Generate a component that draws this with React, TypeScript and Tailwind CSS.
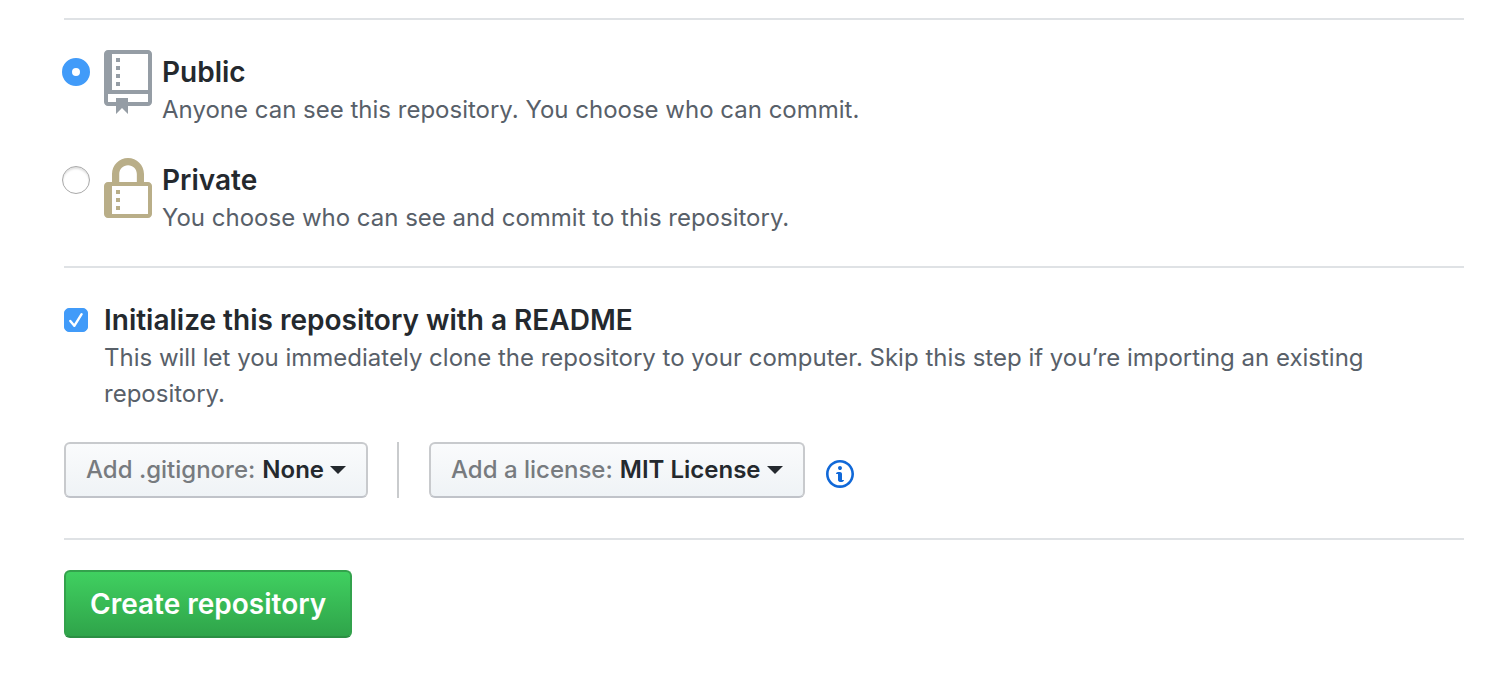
import { useState } from "react";
import type { ReactNode } from "react";

const REPO_PATH =
  "M4 9H3V8h1v1zm0-3H3v1h1V6zm0-2H3v1h1V4zm0-2H3v1h1V2zm8-1v12c0 .55-.45 1-1 1H6v2l-1.5-1.5L3 16v-2H1c-.55 0-1-.45-1-1V1c0-.55.45-1 1-1h10c.55 0 1 .45 1 1zm-1 10H1v2h2v-1h3v1h5v-2zm0-10H2v9h9V1z";
const LOCK_PATH =
  "M4 13H3v-1h1v1zm8-6v7c0 .55-.45 1-1 1H1c-.55 0-1-.45-1-1V7c0-.55.45-1 1-1h1V4c0-2.2 1.8-4 4-4s4 1.8 4 4v2h1c.55 0 1 .45 1 1zM3.8 6h4.41V4c0-1.22-.98-2.2-2.2-2.2-1.22 0-2.2.98-2.2 2.2v2H3.8zM11 7H2v7h9V7zM4 8H3v1h1V8zm0 2H3v1h1v-1z";
const INFO_PATH =
  "M6.3 5.69a.942.942 0 0 1-.28-.7c0-.28.09-.52.28-.7.19-.18.42-.28.7-.28.28 0 .52.09.7.28.18.19.28.42.28.7 0 .28-.09.52-.28.7a1 1 0 0 1-.7.3c-.28 0-.52-.11-.7-.3zM8 7.99c-.02-.25-.11-.48-.31-.69-.2-.19-.42-.3-.69-.31H6c-.27.02-.48.13-.69.31-.2.2-.3.44-.31.69h1v3c.02.27.11.5.31.69.2.2.42.31.69.31h1c.27 0 .48-.11.69-.31.2-.19.3-.42.31-.69H8V7.98v.01zM7 2.3c-3.14 0-5.7 2.54-5.7 5.68 0 3.14 2.56 5.7 5.7 5.7s5.7-2.55 5.7-5.7c0-3.15-2.56-5.69-5.7-5.69v.01zM7 .98c3.86 0 7 3.14 7 7s-3.14 7-7 7-7-3.12-7-7 3.14-7 7-7z";

type VisibilityProps = {
  id: string;
  title: string;
  note: string;
  checked: boolean;
  onSelect: () => void;
  icon: ReactNode;
};

function VisibilityOption({ id, title, note, checked, onSelect, icon }: VisibilityProps) {
  return (
    <div className="flex items-start">
      <div className="w-10 shrink-0 pt-2">
        <input
          id={id}
          type="radio"
          name="visibility"
          checked={checked}
          onChange={onSelect}
          aria-describedby={id + "-note"}
          className="-ml-0.5 block size-7 appearance-none rounded-full border border-[#a9a9a9] bg-white shadow-[inset_0_2px_2px_rgba(0,0,0,0.12)] checked:border-10 checked:border-[#419bf9] checked:shadow-none"
        />
      </div>
      <div className="w-12 shrink-0">{icon}</div>
      <div className="pt-0.5 pl-2.5">
        <label htmlFor={id} className="block text-[28px] leading-10 font-semibold">
          {title}
        </label>
        <p id={id + "-note"} className="text-[24px] leading-9 text-[#586069]">
          {note}
        </p>
      </div>
    </div>
  );
}

function Picker({ label, options, initial }: { label: string; options: string[]; initial: string }) {
  const [value, setValue] = useState(initial);
  return (
    <label className="flex h-14 items-center rounded-md border-2 border-[#c8cacd] border-b-[#c0c3c9] bg-linear-to-b from-[#fafbfc] to-[#eff3f6] px-5 text-[24px] leading-9">
      <span className="font-medium text-[#777b7f]">{label}</span>
      <select
        value={value}
        onChange={(e) => setValue(e.target.value)}
        className="ml-[7px] appearance-none field-sizing-content bg-transparent font-semibold text-[#24292e]"
      >
        {options.map((o) => (
          <option key={o}>{o}</option>
        ))}
      </select>
      <svg viewBox="0 0 16 8" className="ml-1.5 h-2 w-4" aria-hidden="true">
        <path d="M0 0h16L8 8z" fill="#24292e" />
      </svg>
    </label>
  );
}

export default function App() {
  const [visibility, setVisibility] = useState("public");
  const [readme, setReadme] = useState(true);

  return (
    <form
      onSubmit={(e) => e.preventDefault()}
      className="bg-white pt-[18px] pr-10 pb-9 pl-16 font-[Inter,sans-serif] text-[#24292e]"
    >
      <fieldset
        aria-label="Visibility"
        className="flex flex-col gap-[30px] border-y-2 border-[#dfe2e5] py-[30px]"
      >
        <VisibilityOption
          id="public"
          title="Public"
          note="Anyone can see this repository. You choose who can commit."
          checked={visibility === "public"}
          onSelect={() => setVisibility("public")}
          icon={
            <svg viewBox="0 0 12 16" className="h-16 w-12" fill="#959da5" aria-hidden="true">
              <path fillRule="evenodd" d={REPO_PATH} />
            </svg>
          }
        />
        <VisibilityOption
          id="private"
          title="Private"
          note="You choose who can see and commit to this repository."
          checked={visibility === "private"}
          onSelect={() => setVisibility("private")}
          icon={
            <svg viewBox="0 0 12 16" className="h-16 w-12" fill="#b9ae88" aria-hidden="true">
              <path fillRule="evenodd" d={LOCK_PATH} />
            </svg>
          }
        />
      </fieldset>

      <section className="flex flex-col gap-[30px] border-b-2 border-[#dfe2e5] pt-8 pb-10">
        <div className="flex items-start">
          <div className="grid w-10 shrink-0 pt-2">
            <input
              id="readme"
              type="checkbox"
              checked={readme}
              onChange={(e) => setReadme(e.target.checked)}
              aria-describedby="readme-note"
              className="peer col-start-1 row-start-1 size-6 appearance-none rounded-[5px] border border-[#a9a9a9] checked:border-[#419bf9] checked:bg-[#419bf9]"
            />
            <svg
              viewBox="0 0 24 24"
              className="pointer-events-none invisible col-start-1 row-start-1 size-6 peer-checked:visible"
              fill="none"
              stroke="#fff"
              strokeWidth="2.4"
              strokeLinecap="round"
              strokeLinejoin="round"
              aria-hidden="true"
            >
              <path d="M6.3 13l4 4.8L17.6 6.2" />
            </svg>
          </div>
          <div>
            <label htmlFor="readme" className="block text-[28px] leading-10 font-semibold">
              Initialize this repository with a README
            </label>
            <p id="readme-note" className="text-[24px] leading-9 text-[#586069]">
              This will let you immediately clone the repository to your computer. Skip this step if you’re importing an
              existing repository.
            </p>
          </div>
        </div>

        <div className="flex items-center">
          <Picker label="Add .gitignore:" options={["None", "Node", "Python"]} initial="None" />
          <div className="mr-[30px] ml-[29px] w-0.5 self-stretch bg-[#c9cbcd]" />
          <Picker label="Add a license:" options={["None", "MIT License", "Apache License 2.0"]} initial="MIT License" />
          <a href="#licenses" aria-label="About licenses" className="ml-[21px] pt-2 text-[#1068d8]">
            <svg viewBox="0 0 14 16" className="h-8 w-7" fill="currentColor" aria-hidden="true">
              <path fillRule="evenodd" d={INFO_PATH} />
            </svg>
          </a>
        </div>
      </section>

      <button
        type="submit"
        className="mt-[30px] block h-[68px] rounded-md border-2 border-[#33a24c] border-b-[#2b8f43] bg-linear-to-b from-[#40d060] to-[#2fa44a] px-6 text-[28px] leading-10 font-semibold text-white"
      >
        Create repository
      </button>
    </form>
  );
}
